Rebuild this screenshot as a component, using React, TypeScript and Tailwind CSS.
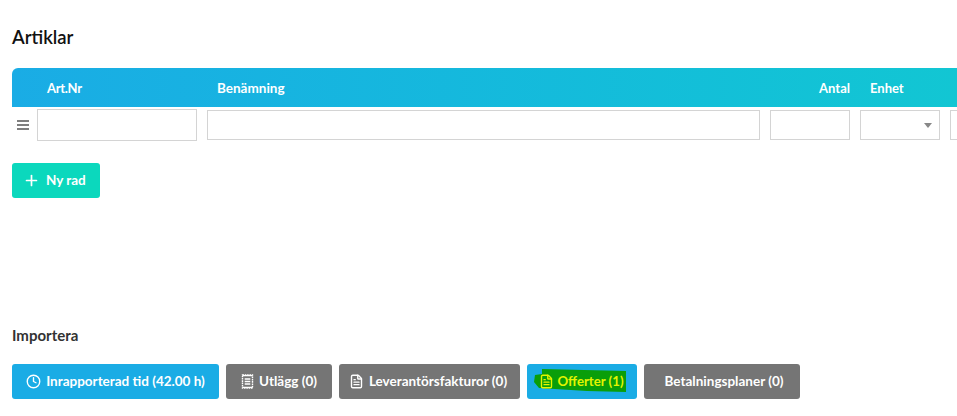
import { Clock, FileText, Plus } from "lucide-react";
import type { ReactNode } from "react";

function Receipt() {
  return (
    <svg width="13" height="15" viewBox="0 0 13 15" fill="none" stroke="currentColor" strokeWidth="1.4">
      <path d="M1.5 1h10v13h-10z" strokeDasharray="1.6 0.7" />
      <path d="M1.5 1.6h10M1.5 13.4h10M3.7 5h5.6M3.7 7.5h5.6M3.7 10h5.6" />
    </svg>
  );
}

function ImportButton({ w, color, icon, label, extra = "" }: { w: string; color: string; icon?: ReactNode; label: string; extra?: string }) {
  return (
    <div className={`${w} ${color} ${extra} text-white justify-center h-[35px] rounded-[3px] flex items-center gap-[5px] text-[13.5px] font-bold shrink-0`}>
      {icon}
      <span>{label}</span>
    </div>
  );
}

export default function App() {
  return (
    <div className="w-[957px] h-[416px] overflow-hidden bg-white pl-3 pt-[26px] font-['Lato','Noto_Sans',sans-serif]">
      <h2 className="text-[18.5px] leading-[22px] font-semibold text-[#111]">Artiklar</h2>

      <div className="mt-[20px] w-[945px] h-[39px] rounded-tl-[6px] bg-linear-to-r from-[#1aace5] to-[#12c6d3] flex items-center text-white text-[13px] font-bold pt-[2px]">
        <span className="ml-[35px] w-[170px] tracking-[-0.3px]">Art.Nr</span>
        <span className="flex-1 text-[13.5px]">Benämning</span>
        <span className="w-[40px] text-right">Antal</span>
        <span className="ml-[20px] w-[87px]">Enhet</span>
      </div>

      <div className="flex items-center h-[34px] w-[945px] overflow-hidden mt-[1px]">
        <svg width="12" height="10" viewBox="0 0 12 10" className="ml-[5px] mr-2 shrink-0" stroke="#555" strokeWidth="1.5">
          <path d="M0 1h12M0 5h12M0 9h12" />
        </svg>
        <div className="w-[160px] h-[32px] border border-[#d4d4d4] shrink-0" />
        <div className="ml-[10px] w-[553px] h-[30px] border border-[#d4d4d4] shrink-0" />
        <div className="ml-[10px] w-[80px] h-[30px] border border-[#d4d4d4] shrink-0" />
        <div className="ml-[10px] w-[80px] h-[30px] border border-[#d4d4d4] shrink-0 flex items-center justify-end pr-[7px]">
          <div className="w-0 h-0 border-x-[4px] border-x-transparent border-t-[5px] border-t-[#888]" />
        </div>
        <div className="ml-[10px] w-[80px] h-[30px] border border-[#d4d4d4] shrink-0" />
      </div>

      <div className="mt-[21px] w-[88px] h-[35px] rounded-[3px] bg-[#0bd8bd] text-white flex items-center pl-[11px] gap-[6px] text-[13.5px] font-bold">
        <Plus size={17} strokeWidth={2.4} />
        <span>Ny rad</span>
      </div>

      <div className="mt-[128px] text-[15px] leading-[18px] font-bold text-[#333]">Importera</div>

      <div className="mt-[20px] flex gap-[7px]">
        <ImportButton w="w-[207px]" color="bg-[#1aace5]" icon={<Clock size={15} strokeWidth={2.2} />} label="Inrapporterad tid (42.00 h)" />
        <ImportButton w="w-[106px]" color="bg-[#757575]" icon={<Receipt />} label="Utlägg (0)" />
        <ImportButton w="w-[181px]" color="bg-[#757575]" icon={<FileText size={15} strokeWidth={2.2} />} label="Leverantörsfakturor (0)" extra="pr-[3px]" />
        <div className="relative w-[110px] h-[35px] rounded-[3px] bg-[#1aace5] shrink-0">
          <svg width="110" height="35" viewBox="0 0 110 35" className="absolute inset-0">
            <path d="M15 5 L99 7 L99 28 L60 27 L12 24 L7 18 L8 11 L15 10 Z" fill="#0a9e0a" />
          </svg>
          <div className="relative h-full flex items-center justify-center gap-[4px] pr-[2px] text-[13.2px] font-bold text-[#e4f500]">
            <FileText size={15} strokeWidth={2.2} />
            <span>Offerter (1)</span>
          </div>
        </div>
        <ImportButton w="w-[156px]" color="bg-[#757575]" label="Betalningsplaner (0)" extra="pl-[4px]" />
      </div>
    </div>
  );
}
